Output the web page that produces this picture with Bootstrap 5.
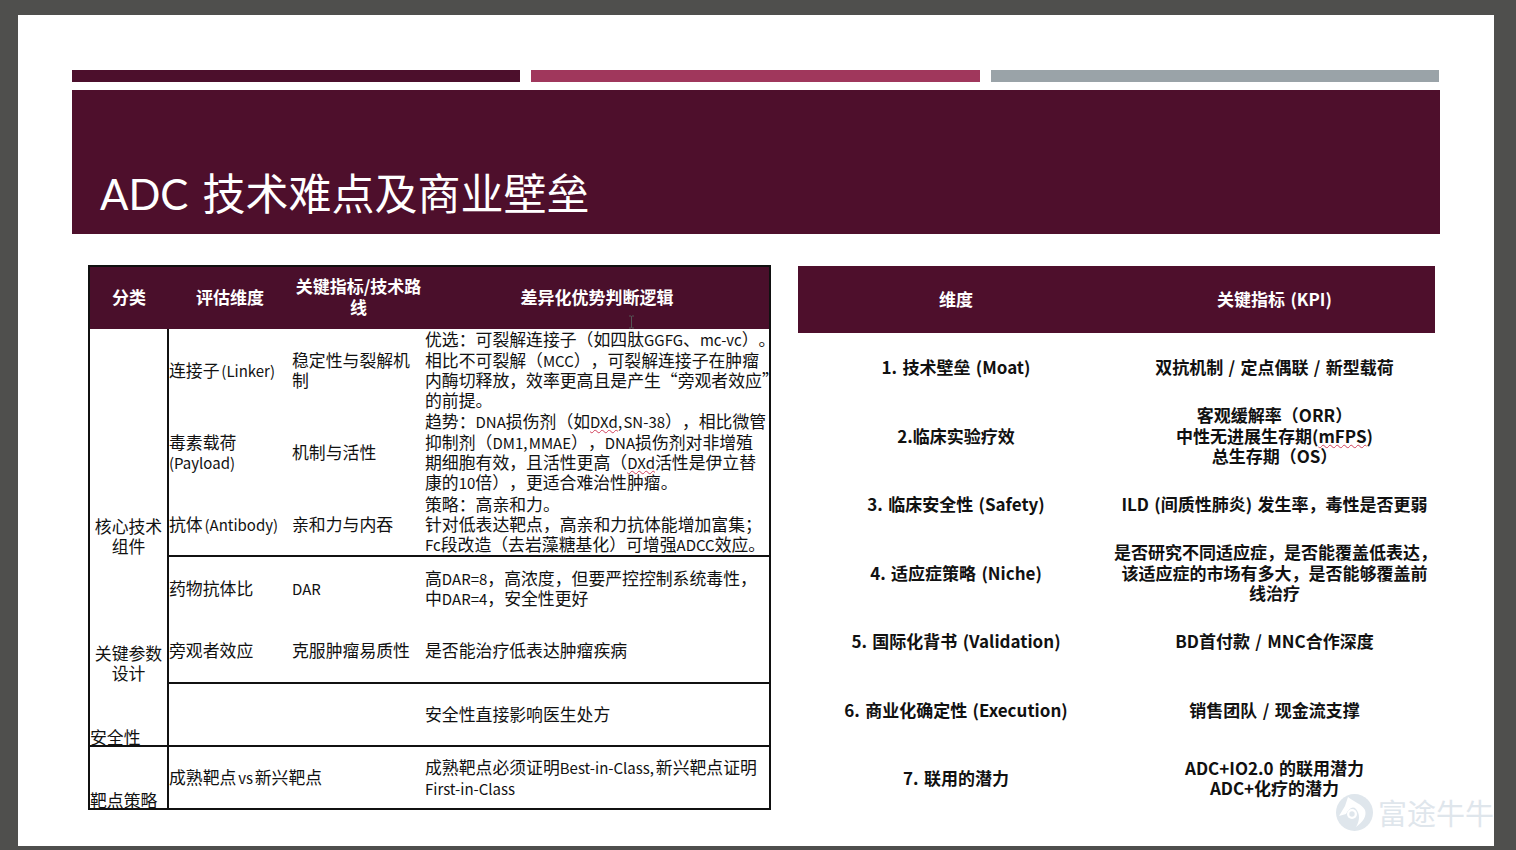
<!DOCTYPE html>
<html lang="zh-CN">
<head>
<meta charset="UTF-8">
<meta name="viewport" content="width=device-width, initial-scale=1.0">
<title>ADC 技术难点及商业壁垒</title>
<link href="https://cdn.jsdelivr.net/npm/bootstrap@5.3.0/dist/css/bootstrap.min.css" rel="stylesheet">
<style>
html, body { height: 100%; }
body {
    background: #4f4f4d;
    padding: 15px 22px 4px 18px;
    font-family: "Noto Sans CJK SC", "Liberation Sans", sans-serif;
    color: #111;
    overflow: hidden;
    text-spacing-trim: space-all;
}
.slide {
    background: #fff;
    height: 831px;
    padding: 55px 54px 0;
    position: relative;
}
.accent-row { gap: 11px; padding-right: 1px; }
.accent-bar { height: 12px; flex: 1 1 0; }
.accent-dark { background: #4c0f2c; }
.accent-rose { background: #a0375c; }
.accent-grey { background: #9aa3a8; }
.title-band {
    background: #4e0f2c;
    height: 144px;
    margin-top: 8px;
    padding: 0 28px 15px;
}
.title-band h1 {
    color: #fff;
    font-size: 43px;
    font-weight: 400;
    line-height: 1.2;
    margin: 0;
}
.title-latin { font-family: Lato, "Liberation Sans", sans-serif; font-size: 42px; margin-right: 14px; }
.tables-row { margin-top: 31px; padding-left: 16px; gap: 27px; }
.left-wrap { width: 683px; flex: none; }
.right-wrap { width: 637px; flex: none; }

.spec-table { table-layout: fixed; border: 2px solid #111; border-collapse: collapse; font-size: 16.85px; line-height: 20.3px; word-spacing: -2px; }
.spec-table th, .spec-table td { padding: 0; white-space: nowrap; vertical-align: middle; background: transparent; color: #111; border: 0; }
.spec-table thead th { background: #4a0f2b; color: #fff; text-align: center; font-weight: 700; line-height: 21px; height: 63px; font-size: 17px; padding-bottom: 4px; }
.spec-table tbody td.group-cell { vertical-align: bottom; text-align: center; border-right: 2px solid #111; line-height: 20px; padding: 0; }
.spec-table tbody td.group-left { text-align: left; line-height: 16px; }
.spec-table tr.row-end td { border-bottom: 2px solid #111; }
.spec-table .latin { font-size: 15px; line-height: 1; }
.h-82 { height: 82px; }
.h-63 { height: 63px; }
.h-64 { height: 64px; }
.misspelt { text-decoration: underline wavy #d0405a 1px; text-underline-offset: 1px; }

.kpi-table { table-layout: fixed; font-size: 17px; line-height: 20.5px; font-weight: 700; margin-top: 1px; word-spacing: 1.5px; }
.kpi-table th, .kpi-table td { padding: 0; text-align: center; vertical-align: middle; border: 0; background: transparent; color: #111; height: 68.5px; white-space: nowrap; }
.kpi-table thead th { background: #4e0f2c; color: #fff; height: 67px; }

.cursor-mark { position: absolute; left: 610px; top: 300px; }
.watermark {
    position: absolute;
    right: 0;
    bottom: 15px;
    color: #dfe6ec;
    font-size: 29px;
    line-height: 37px;
    gap: 5px;
}
</style>
</head>
<body>
<div class="slide">
    <div class="accent-row d-flex">
        <div class="accent-bar accent-dark"></div>
        <div class="accent-bar accent-rose"></div>
        <div class="accent-bar accent-grey"></div>
    </div>
    <div class="title-band d-flex align-items-end">
        <h1><span class="title-latin">ADC</span>技术难点及商业壁垒</h1>
    </div>

    <div class="tables-row d-flex align-items-start">
        <div class="left-wrap">
            <table class="table spec-table mb-0">
                <colgroup><col style="width:79px"><col style="width:124px"><col style="width:133px"><col></colgroup>
                <thead>
                    <tr><th>分类</th><th>评估维度</th><th>关键指标/技术路<br>线</th><th>差异化优势判断逻辑</th></tr>
                </thead>
                <tbody>
                    <tr class="h-82">
                        <td class="group-cell" rowspan="3">核心技术<br>组件</td>
                        <td>连接子 <span class="latin">(Linker)</span></td>
                        <td>稳定性与裂解机<br>制</td>
                        <td>优选：可裂解连接子（如四肽<span class="latin">GGFG</span>、<span class="latin">mc-vc</span>）。<br>相比不可裂解（<span class="latin">MCC</span>），可裂解连接子在肿瘤<br>内酶切释放，效率更高且是产生“旁观者效应”<br>的前提。</td>
                    </tr>
                    <tr class="h-82">
                        <td>毒素载荷<br><span class="latin">(Payload)</span></td>
                        <td>机制与活性</td>
                        <td>趋势：<span class="latin">DNA</span>损伤剂（如<span class="latin misspelt">DXd</span><span class="latin">, SN-38</span>），相比微管<br>抑制剂（<span class="latin">DM1, MMAE</span>），<span class="latin">DNA</span>损伤剂对非增殖<br>期细胞有效，且活性更高（<span class="latin misspelt">DXd</span>活性是伊立替<br>康的<span class="latin">10</span>倍），更适合难治性肿瘤。</td>
                    </tr>
                    <tr class="h-63 row-end">
                        <td>抗体 <span class="latin">(Antibody)</span></td>
                        <td>亲和力与内吞</td>
                        <td>策略：高亲和力。<br>针对低表达靶点，高亲和力抗体能增加富集；<br><span class="latin">Fc</span>段改造（去岩藻糖基化）可增强<span class="latin">ADCC</span>效应。</td>
                    </tr>
                    <tr class="h-63">
                        <td class="group-cell" rowspan="2">关键参数<br>设计</td>
                        <td>药物抗体比</td>
                        <td><span class="latin">DAR</span></td>
                        <td>高<span class="latin">DAR=8</span>，高浓度，但要严控控制系统毒性，<br>中<span class="latin">DAR=4</span>，安全性更好</td>
                    </tr>
                    <tr class="h-64 row-end">
                        <td>旁观者效应</td>
                        <td>克服肿瘤易质性</td>
                        <td>是否能治疗低表达肿瘤疾病</td>
                    </tr>
                    <tr class="h-63 row-end">
                        <td class="group-cell group-left">安全性</td>
                        <td></td>
                        <td></td>
                        <td>安全性直接影响医生处方</td>
                    </tr>
                    <tr class="h-63">
                        <td class="group-cell group-left">靶点策略</td>
                        <td colspan="2">成熟靶点 <span class="latin">vs</span> 新兴靶点</td>
                        <td>成熟靶点必须证明<span class="latin">Best-in-Class,</span> 新兴靶点证明<br><span class="latin">First-in-Class</span></td>
                    </tr>
                </tbody>
            </table>
        </div>

        <div class="right-wrap">
            <table class="table kpi-table mb-0">
                <colgroup><col style="width:316px"><col></colgroup>
                <thead>
                    <tr><th>维度</th><th>关键指标 (KPI)</th></tr>
                </thead>
                <tbody>
                    <tr><td>1. 技术壁垒 (Moat)</td><td>双抗机制 / 定点偶联 / 新型载荷</td></tr>
                    <tr><td>2.临床实验疗效</td><td>客观缓解率（ORR）<br>中性无进展生存期(<span class="misspelt">mFPS</span>)<br>总生存期（OS）</td></tr>
                    <tr><td>3. 临床安全性 (Safety)</td><td>ILD (间质性肺炎) 发生率，毒性是否更弱</td></tr>
                    <tr><td>4. 适应症策略 (Niche)</td><td>是否研究不同适应症，是否能覆盖低表达，<br>该适应症的市场有多大，是否能够覆盖前<br>线治疗</td></tr>
                    <tr><td>5. 国际化背书 (Validation)</td><td>BD首付款 / MNC合作深度</td></tr>
                    <tr><td>6. 商业化确定性 (Execution)</td><td>销售团队 / 现金流支撑</td></tr>
                    <tr><td>7. 联用的潜力</td><td>ADC+IO2.0 的联用潜力<br>ADC+化疗的潜力</td></tr>
                </tbody>
            </table>
        </div>
    </div>

    <svg class="cursor-mark" width="7" height="14" viewBox="0 0 7 14" aria-hidden="true">
        <path d="M1 1h2l.5.6L4 1h2M3.5 1.5v11M1 13h2l.5-.6.5.6h2" fill="none" stroke="#555" stroke-width="1"/>
    </svg>

    <div class="watermark d-flex align-items-center">
        <svg width="37" height="37" viewBox="0 0 37 37" aria-hidden="true">
            <circle cx="18.500" cy="18.500" r="18.500" fill="#dfe6ec"/>
            <path d="M12 3C18 8 26 10 29 16C31 22 27 28 20 33C24 26 24 20 20 15C17 12 13 14 10 20L3 22L9 12Z" fill="#fff"/>
            <circle cx="16" cy="20" r="5" fill="#fff"/>
            <circle cx="16" cy="20" r="2.700" fill="#dfe6ec"/>
        </svg>
        <span>富途牛牛</span>
    </div>
</div>
<script src="https://cdn.jsdelivr.net/npm/bootstrap@5.3.0/dist/js/bootstrap.bundle.min.js"></script>
</body>
</html>
